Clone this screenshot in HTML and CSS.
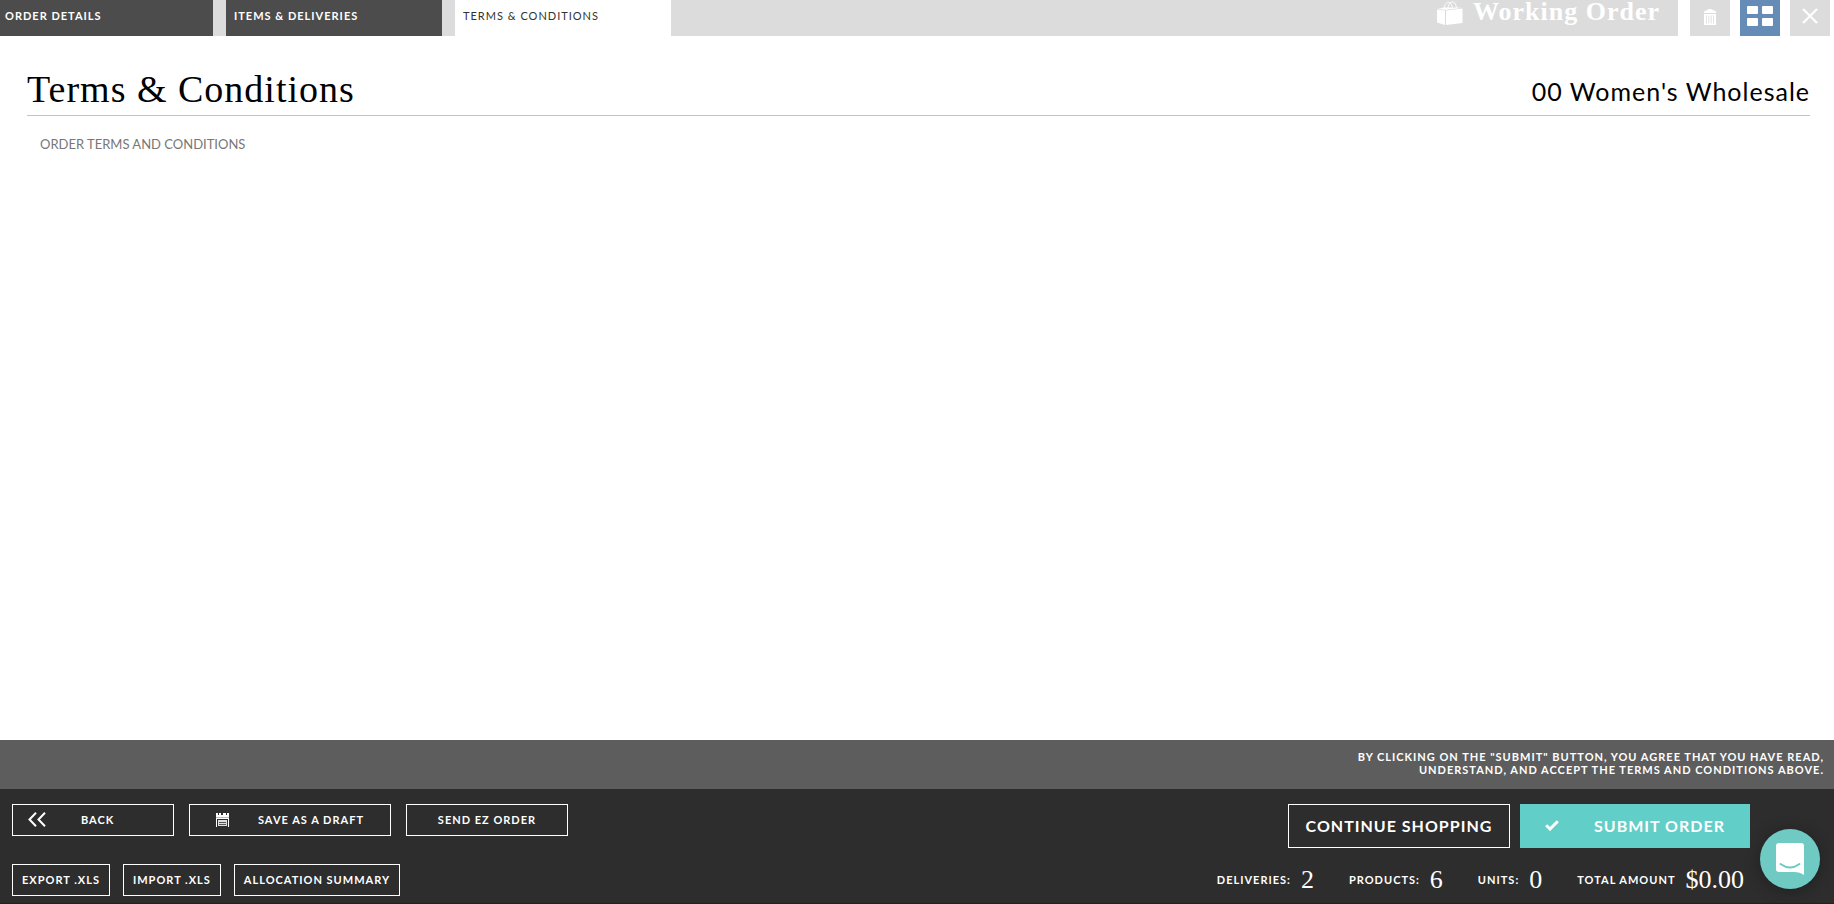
FILE: index.html
```
<!DOCTYPE html>
<html lang="en">
<head>
    <meta charset="UTF-8">
    <meta name="viewport" content="width=device-width, initial-scale=1.0">
    <title>Working Order - Terms &amp; Conditions</title>
    <link rel="stylesheet" href="styles.css">
</head>
<body>
    <header class="topbar">
        <div class="titlebar">
            <nav class="tabs">
                <a class="tab tab-first" href="#details">ORDER DETAILS</a>
                <a class="tab" href="#items">ITEMS &amp; DELIVERIES</a>
                <a class="tab active" href="#terms">TERMS &amp; CONDITIONS</a>
            </nav>
            <div class="working">
                <svg class="bag" width="26" height="24" viewBox="0 0 26 24">
                    <path d="M0 8.5L8 9.5V24L0 21.5zM9 9.500L25.500 7.500V22L9 24z" fill="#fff"/>
                    <path d="M0.500 8L7 6.500L25 6.800L9 8.800z" fill="#fff"/>
                    <path d="M7 9C7 4 9 1.500 11.500 1.500S15 4 15.500 8M11 7C11.500 3 13 1 15.500 1S19 3.500 19.500 7.500" fill="none" stroke="#fff" stroke-width="1"/>
                </svg>
                <span class="working-text">Working Order</span>
            </div>
        </div>
        <div class="tools">
            <button class="tool" aria-label="Delete">
                <svg width="14" height="17" viewBox="0 0 14 17">
                    <path d="M4 2.500C4.500 0.500 9.500 0.500 10 2.500H12L13.500 5H0.500L2 2.500zM1 6H13V17H1z" fill="#fff"/>
                    <path d="M3.500 7.500V15.500M5.800 7.500V15.500M8.200 7.500V15.500M10.500 7.500V15.500" stroke="#dcdcdc" stroke-width="0.8"/>
                </svg>
            </button>
            <button class="tool tool-grid" aria-label="Grid view">
                <svg width="26" height="20" viewBox="0 0 26 20" fill="#fff">
                    <rect x="0" y="0" width="11" height="8" rx="1"/>
                    <rect x="15" y="0" width="11" height="8" rx="1"/>
                    <rect x="0" y="12" width="11" height="8" rx="1"/>
                    <rect x="15" y="12" width="11" height="8" rx="1"/>
                </svg>
            </button>
            <button class="tool" aria-label="Close">
                <svg width="16" height="16" viewBox="0 0 16 16">
                    <path d="M1 1L15 15M15 1L1 15" stroke="#fff" stroke-width="2.200"/>
                </svg>
            </button>
        </div>
    </header>

    <main class="content">
        <div class="heading">
            <h1>Terms &amp; Conditions</h1>
            <h2>00 Women's Wholesale</h2>
        </div>
        <p class="terms">ORDER TERMS AND CONDITIONS</p>
    </main>

    <footer>
        <div class="agree">
            <p>BY CLICKING ON THE "SUBMIT" BUTTON, YOU AGREE THAT YOU HAVE READ,<br>
            UNDERSTAND, AND ACCEPT THE TERMS AND CONDITIONS ABOVE.</p>
        </div>
        <div class="bottom">
            <div class="left">
                <div class="row">
                    <button class="btn btn-back">
                        <svg width="18" height="15" viewBox="0 0 18 15">
                            <path d="M8 0.800L1.500 7.500L8 14.200M17 0.800L10.500 7.500L17 14.200" fill="none" stroke="#fff" stroke-width="2"/>
                        </svg>
                        <span>BACK</span>
                    </button>
                    <button class="btn btn-save">
                        <svg width="13" height="14" viewBox="0 0 13 14">
                            <path d="M0 0H2V2H11V0H13V14H0z" fill="#fff"/>
                            <path d="M3 0H5V2H3zM7 0H10V2H7z" fill="#fff"/>
                            <path d="M0 4H13V5H0z" fill="#bbb"/>
                            <path d="M1 6H12V14H1z" fill="#2d2d2d"/>
                            <path d="M2 7H11V13H2z" fill="#ddd"/>
                            <path d="M3 9H10V10H3zM3 11H10V12H3z" fill="#555"/>
                        </svg>
                        <span>SAVE AS A DRAFT</span>
                    </button>
                    <button class="btn btn-send">SEND EZ ORDER</button>
                </div>
                <div class="row row-small">
                    <button class="btn">EXPORT .XLS</button>
                    <button class="btn">IMPORT .XLS</button>
                    <button class="btn">ALLOCATION SUMMARY</button>
                </div>
            </div>
            <div class="right">
                <div class="actions">
                    <button class="btn btn-big">CONTINUE SHOPPING</button>
                    <button class="btn btn-big btn-submit">
                        <svg width="14" height="11" viewBox="0 0 14 11">
                            <path d="M1.200 5.200L5 9L12.800 1.300" fill="none" stroke="#fff" stroke-width="3"/>
                        </svg>
                        <span>SUBMIT ORDER</span>
                    </button>
                </div>
                <dl class="totals">
                    <div><dt>DELIVERIES:</dt><dd>2</dd></div>
                    <div><dt>PRODUCTS:</dt><dd>6</dd></div>
                    <div><dt>UNITS:</dt><dd>0</dd></div>
                    <div><dt>TOTAL AMOUNT</dt><dd>$0.00</dd></div>
                </dl>
            </div>
        </div>
    </footer>

    <button class="chat" aria-label="Open chat">
        <svg width="28" height="32" viewBox="0 0 28 32">
            <path d="M3 0H25Q28 0 28 3V32Q24 29 18 29H3Q0 29 0 26V3Q0 0 3 0z" fill="#fff"/>
            <path d="M4.500 21Q14 28 23.500 21" fill="none" stroke="#6fcac4" stroke-width="2" stroke-linecap="round"/>
        </svg>
    </button>
</body>
</html>
```
FILE: styles.css
```
*{
    box-sizing: border-box;
}
body{
    margin: 0;
    min-height: 100vh;
    display: flex;
    flex-direction: column;
    background: #fff;
    font-family: Lato, "Liberation Sans", sans-serif;
}
button{
    font-family: inherit;
    cursor: pointer;
}
h1, h2, p, dl, dd{
    margin: 0;
}

/* top bar */
.topbar{
    display: flex;
    height: 36px;
    padding-right: 4px;
}
.titlebar{
    flex: 1;
    display: flex;
    justify-content: space-between;
    background: #dcdcdc;
}
.tabs{
    display: flex;
    gap: 13px;
}
.tab{
    width: 216px;
    padding-left: 8px;
    background: #4c4c4c;
    color: #fff;
    font-size: 11px;
    font-weight: bold;
    line-height: 32px;
    letter-spacing: 1px;
    text-decoration: none;
}
.tab-first{
    width: 213px;
    padding-left: 5px;
}
.tab.active{
    background: #fff;
    color: #333;
    font-weight: normal;
}
.working{
    display: flex;
    gap: 10px;
    padding-right: 18px;
    color: #fff;
}
.bag{
    margin-top: 1px;
}
.working-text{
    font-family: "Liberation Serif", serif;
    font-size: 26px;
    font-weight: bold;
    line-height: 24px;
    letter-spacing: 1px;
}
.tools{
    display: flex;
    gap: 10px;
    margin-left: 12px;
}
.tool{
    display: flex;
    align-items: center;
    justify-content: center;
    width: 40px;
    padding: 0 0 4px;
    border: 0;
    background: #dcdcdc;
}
.tool-grid{
    background: #658bb7;
}

/* content */
.content{
    flex: 1;
    padding: 32px 24px 0 27px;
}
.heading{
    display: flex;
    justify-content: space-between;
    align-items: flex-start;
    height: 48px;
    border-bottom: 1px solid #c3c3c3;
    color: #000;
}
h1{
    font-family: "Liberation Serif", serif;
    font-size: 38px;
    font-weight: normal;
    line-height: 42px;
    letter-spacing: 1px;
}
h2{
    font-size: 25px;
    font-weight: normal;
    line-height: 46px;
    letter-spacing: 1px;
}
.terms{
    padding: 20px 13px;
    color: #777;
    font-size: 13px;
    line-height: 16px;
}

/* footer */
.agree{
    height: 49px;
    padding: 10px 10px 0;
    background: #5d5d5d;
    color: #fff;
    font-size: 11px;
    font-weight: bold;
    line-height: 13px;
    letter-spacing: 1px;
    text-align: right;
}
.bottom{
    display: flex;
    justify-content: space-between;
    padding: 15px 84px 7px 12px;
    border-bottom: 1px solid #231f22;
    background: #2d2d2d;
    color: #fff;
}
.row{
    display: flex;
    gap: 15px;
}
.row-small{
    gap: 13px;
    margin-top: 28px;
}
.btn{
    display: flex;
    align-items: center;
    justify-content: center;
    height: 32px;
    padding: 0 9px 1px;
    border: 1px solid #fff;
    background: transparent;
    color: #fff;
    font-size: 11px;
    font-weight: bold;
    letter-spacing: 1px;
    white-space: nowrap;
}
.btn-back{
    width: 162px;
    justify-content: flex-start;
    gap: 35px;
    padding-left: 15px;
}
.btn-save{
    width: 202px;
    justify-content: flex-start;
    gap: 29px;
    padding-left: 26px;
}
.btn-send{
    width: 162px;
}
.actions{
    display: flex;
    justify-content: flex-end;
    gap: 10px;
}
.btn-big{
    width: 222px;
    height: 44px;
    font-size: 16px;
}
.btn-submit{
    width: 230px;
    gap: 35px;
    border-color: #61cec8;
    background: #61cec8;
}
.totals{
    display: flex;
    justify-content: flex-end;
    gap: 35px;
    margin-top: 18px;
    padding-right: 6px;
}
.totals div{
    display: flex;
    align-items: center;
    gap: 10px;
}
.totals dt{
    padding-bottom: 2px;
    font-size: 11px;
    font-weight: bold;
    letter-spacing: 1px;
}
.totals dd{
    font-family: "Liberation Serif", serif;
    font-size: 26px;
    line-height: 28px;
}
.chat{
    position: fixed;
    right: 14px;
    bottom: 15px;
    display: flex;
    align-items: center;
    justify-content: center;
    width: 60px;
    height: 60px;
    padding: 0;
    border: 0;
    border-radius: 50%;
    background: #6fcac4;
    box-shadow: 0 2px 16px rgba(0, 0, 0, 0.3);
}
```
